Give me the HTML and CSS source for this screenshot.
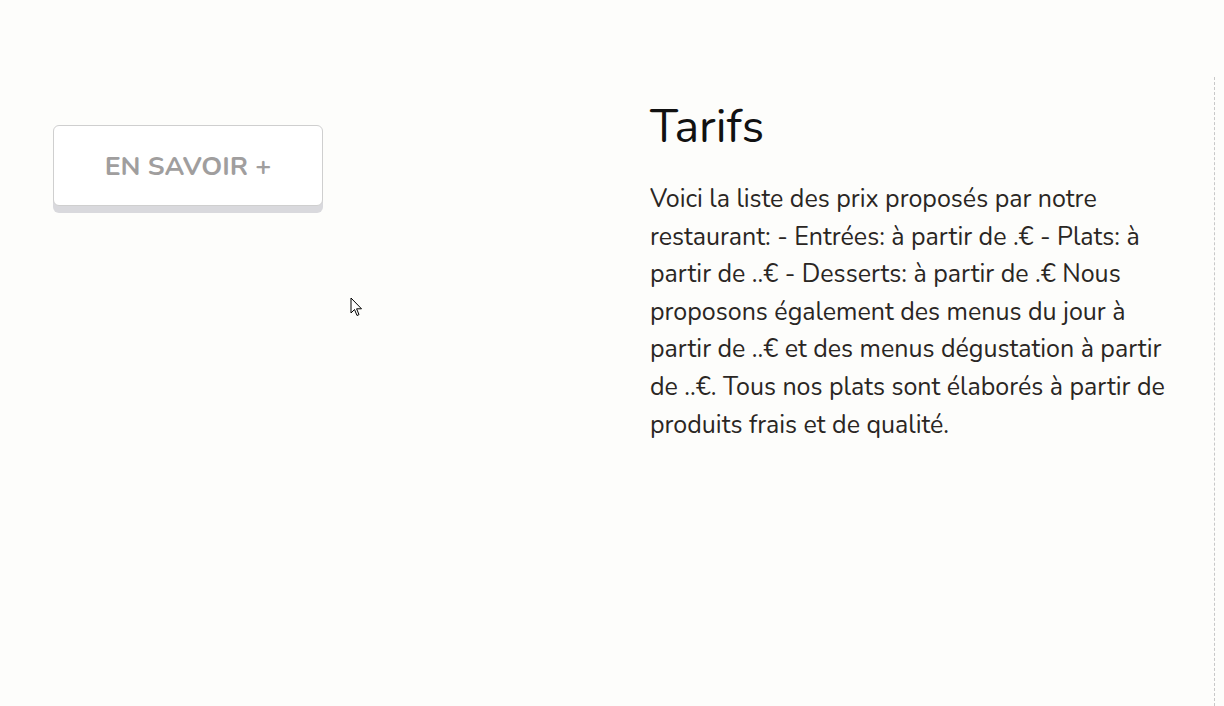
FILE: index.html
```html
<!DOCTYPE html>
<html lang="fr">
<head>
<meta charset="utf-8">
<title>Tarifs</title>
<link rel="stylesheet" href="styles.css">
</head>
<body>
<div class="page">
  <div class="col-left">
    <a class="btn" href="#">EN SAVOIR +</a>
  </div>
  <div class="col-right">
    <h2 class="title">Tarifs</h2>
    <p class="text">Voici la liste des prix proposés par notre restaurant: - Entrées: à partir de .€ - Plats: à partir de ..€ - Desserts: à partir de .€ Nous proposons également des menus du jour à partir de ..€ et des menus dégustation à partir de ..€. Tous nos plats sont élaborés à partir de produits frais et de qualité.</p>
  </div>
  <div class="divider"></div>
</div>
<svg class="cursor" width="13" height="21" viewBox="0 0 13 21"><path d="M1 1 L1 16 L4.5 12.5 L7 18.5 L9 17.6 L6.6 11.8 L11.5 11.8 Z" fill="#fff" stroke="#000" stroke-width="1"/></svg>
</body>
</html>
```
FILE: styles.css
```css
html, body {
  margin: 0;
  padding: 0;
  background: #fdfdfb;
  height: 100%;
}
body {
  font-family: "Nunito", "Lato", sans-serif;
  overflow: hidden;
}
.page {
  display: grid;
  grid-template-columns: 597px 564px 2px;
  height: 706px;
  box-sizing: border-box;
  padding-left: 53px;
}
.col-left {
  padding-top: 125px;
}
.btn {
  display: flex;
  align-items: center;
  justify-content: center;
  width: 270px;
  height: 81px;
  box-sizing: border-box;
  border: 1px solid #cfcfcf;
  border-radius: 6px;
  background: #fff;
  box-shadow: 0 7px 0 #d9d9dd;
  color: #a09e9e;
  font-weight: 700;
  font-size: 26.7px;
  text-decoration: none;
}
.col-right {
  padding-top: 99px;
  padding-right: 38px;
}
.title {
  margin: 0 0 26px;
  font-weight: 400;
  font-size: 46.5px;
  line-height: 56px;
  color: #111;
}
.text {
  margin: 0;
  font-size: 25px;
  line-height: 37.6px;
  color: #2a2623;
}
.divider {
  margin-top: 77px;
  border-left: 1px dashed #c8c8c8;
  width: 0;
}
.cursor {
  position: absolute;
  left: 350px;
  top: 297px;
}
```
